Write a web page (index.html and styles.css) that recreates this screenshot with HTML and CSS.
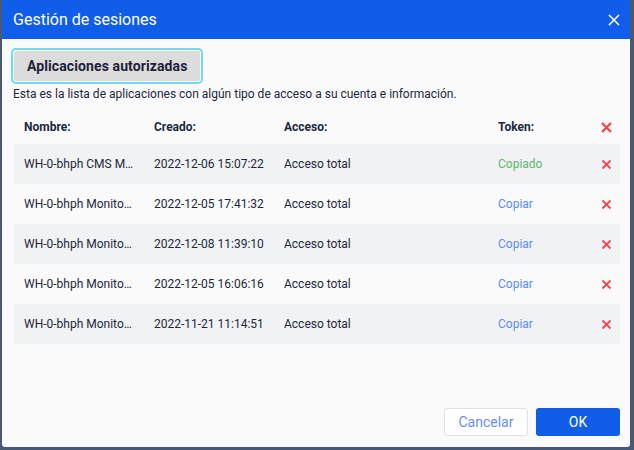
FILE: index.html
```html
<!DOCTYPE html>
<html>
<head>
    <title>Gestión de sesiones</title>
    <link rel="stylesheet" href="styles.css">
</head>
<body>
    <div class="dialog">
        <div class="dialog-header">
            <span class="dialog-title">Gestión de sesiones</span>
            <button class="close-btn" title="Cerrar">
                <svg width="12" height="12" viewBox="0 0 12 12"><path d="M1 1L11 11M11 1L1 11" stroke="#fff" stroke-width="1.6"/></svg>
            </button>
        </div>

        <div class="dialog-body">
            <div class="tabs">
                <button class="tab active">Aplicaciones autorizadas</button>
            </div>
            <p class="description">Esta es la lista de aplicaciones con algún tipo de acceso a su cuenta e información.</p>

            <table class="sessions">
                <thead>
                    <tr>
                        <th class="col-name">Nombre:</th>
                        <th class="col-date">Creado:</th>
                        <th class="col-access">Acceso:</th>
                        <th class="col-token">Token:</th>
                        <th class="col-del"><span class="del del-all"><svg width="11" height="11" viewBox="0 0 11 11"><path d="M1 1L10 10M10 1L1 10" stroke="#f0474a" stroke-width="2.4"/></svg></span></th>
                    </tr>
                </thead>
                <tbody>
                    <tr>
                        <td title="WH-0-bhph CMS Monitor">WH-0-bhph CMS M…</td>
                        <td>2022-12-06 15:07:22</td>
                        <td>Acceso total</td>
                        <td><span class="token copied">Copiado</span></td>
                        <td class="col-del"><span class="del"><svg width="11" height="11" viewBox="0 0 11 11"><path d="M1.5 1.5L9.5 9.5M9.5 1.5L1.5 9.5" stroke="#f0474a" stroke-width="1.8"/></svg></span></td>
                    </tr>
                    <tr>
                        <td title="WH-0-bhph Monitoring">WH-0-bhph Monito…</td>
                        <td>2022-12-05 17:41:32</td>
                        <td>Acceso total</td>
                        <td><span class="token">Copiar</span></td>
                        <td class="col-del"><span class="del"><svg width="11" height="11" viewBox="0 0 11 11"><path d="M1.5 1.5L9.5 9.5M9.5 1.5L1.5 9.5" stroke="#f0474a" stroke-width="1.8"/></svg></span></td>
                    </tr>
                    <tr>
                        <td title="WH-0-bhph Monitoring">WH-0-bhph Monito…</td>
                        <td>2022-12-08 11:39:10</td>
                        <td>Acceso total</td>
                        <td><span class="token">Copiar</span></td>
                        <td class="col-del"><span class="del"><svg width="11" height="11" viewBox="0 0 11 11"><path d="M1.5 1.5L9.5 9.5M9.5 1.5L1.5 9.5" stroke="#f0474a" stroke-width="1.8"/></svg></span></td>
                    </tr>
                    <tr>
                        <td title="WH-0-bhph Monitoring">WH-0-bhph Monito…</td>
                        <td>2022-12-05 16:06:16</td>
                        <td>Acceso total</td>
                        <td><span class="token">Copiar</span></td>
                        <td class="col-del"><span class="del"><svg width="11" height="11" viewBox="0 0 11 11"><path d="M1.5 1.5L9.5 9.5M9.5 1.5L1.5 9.5" stroke="#f0474a" stroke-width="1.8"/></svg></span></td>
                    </tr>
                    <tr>
                        <td title="WH-0-bhph Monitoring">WH-0-bhph Monito…</td>
                        <td>2022-11-21 11:14:51</td>
                        <td>Acceso total</td>
                        <td><span class="token">Copiar</span></td>
                        <td class="col-del"><span class="del"><svg width="11" height="11" viewBox="0 0 11 11"><path d="M1.5 1.5L9.5 9.5M9.5 1.5L1.5 9.5" stroke="#f0474a" stroke-width="1.8"/></svg></span></td>
                    </tr>
                </tbody>
            </table>
        </div>

        <div class="dialog-footer">
            <button class="btn btn-cancel">Cancelar</button>
            <button class="btn btn-ok">OK</button>
        </div>
    </div>
</body>
</html>
```

FILE: styles.css
```css
:root {
    --blue: #105de9;
    --ink: #22283a;
    --row: #f1f2f4;
}

body {
    margin: 0;
    background: #4b5874;
    font-family: Roboto, 'Liberation Sans', sans-serif;
    color: var(--ink);
}

.dialog {
    width: 628px;
    height: 447px;
    margin-left: 2px;
    background: #fafafa;
    display: flex;
    flex-direction: column;
    border-radius: 0 0 3px 3px;
    overflow: hidden;
}

.dialog-header {
    height: 39px;
    background: var(--blue);
    display: flex;
    align-items: center;
    justify-content: space-between;
    padding: 0 9px 0 11px;
    flex-shrink: 0;
}

.dialog-title {
    color: #fff;
    font-size: 16px;
    padding-bottom: 1px;
}

.close-btn {
    background: none;
    border: none;
    padding: 0;
    width: 14px;
    height: 14px;
    display: flex;
    align-items: center;
    justify-content: center;
    cursor: pointer;
}

.dialog-body {
    flex: 1;
    padding: 12px 10px 0 12px;
}

.tab {
    margin: 0;
    height: 30px;
    padding: 0 13px;
    border: none;
    border-radius: 2px;
    background: #dcdcdc;
    color: #1c2238;
    font-family: Roboto, 'Liberation Sans', sans-serif;
    font-size: 14px;
    font-weight: bold;
    letter-spacing: 0.1px;
    box-shadow: 0 0 0 1px #fafafa, 0 0 0 3px #6fdcf0;
    cursor: pointer;
}

.description {
    margin: 5px 0 0 -1px;
    font-size: 12px;
    line-height: 16px;
}

.sessions {
    width: 606px;
    margin-top: 8px;
    border-collapse: collapse;
    table-layout: fixed;
    font-size: 12px;
}

.sessions th {
    height: 34px;
    text-align: left;
    font-weight: bold;
    padding: 0 10px;
}

.sessions td {
    height: 40px;
    padding: 0 10px;
    white-space: nowrap;
}

.sessions tbody tr:nth-child(odd) {
    background: var(--row);
}

.col-name { width: 110px; }
.col-date { width: 110px; }
.col-access { width: 194px; }
.col-token { width: 84px; }
.sessions .col-del {
    width: 28px;
    padding: 0;
    text-align: center;
}

.token {
    color: #5b8df0;
    cursor: pointer;
}

.token.copied {
    color: #5cb86a;
}

.del {
    display: inline-flex;
    vertical-align: middle;
    cursor: pointer;
}

.dialog-footer {
    display: flex;
    justify-content: flex-end;
    gap: 8px;
    padding: 0 10px 11px 0;
}

.btn {
    width: 84px;
    height: 28px;
    border-radius: 3px;
    font-family: Roboto, 'Liberation Sans', sans-serif;
    font-size: 14px;
    cursor: pointer;
}

.btn-cancel {
    background: #fff;
    border: 1px solid #dfe1e8;
    color: #6b8ef0;
}

.btn-ok {
    background: var(--blue);
    border: none;
    color: #fff;
}
```
